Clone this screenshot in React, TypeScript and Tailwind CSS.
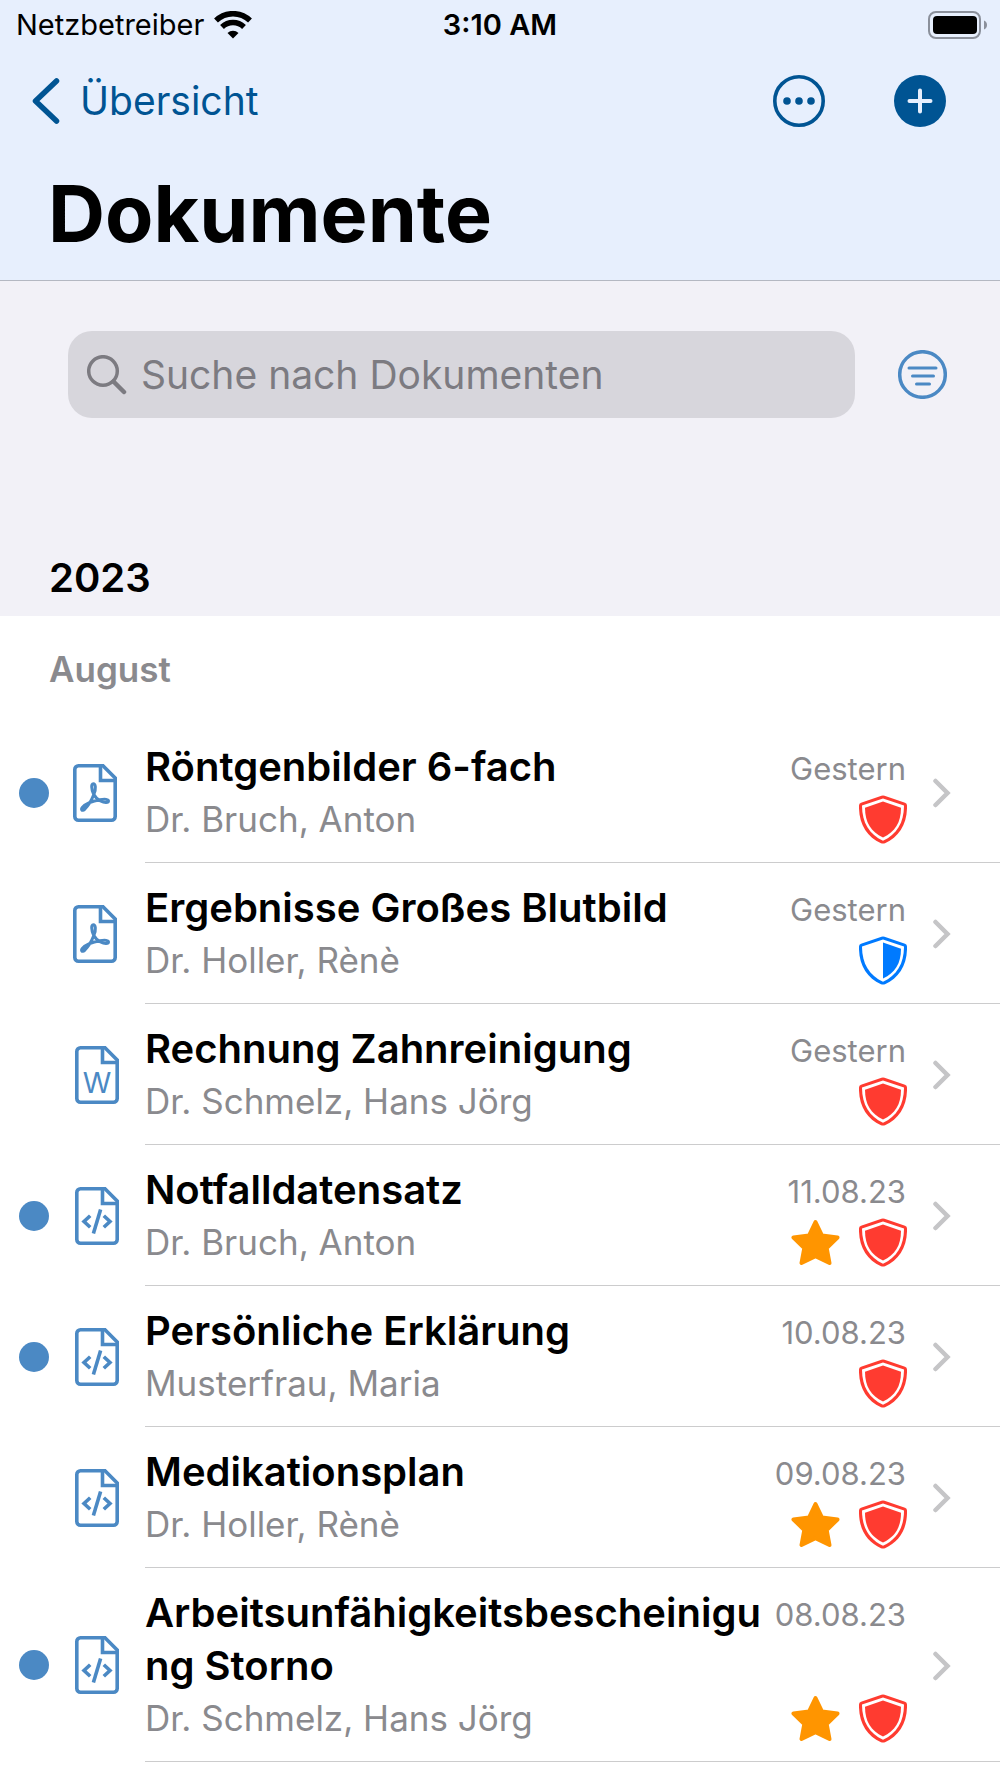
import type { ReactNode } from "react";

type FileType = "pdf" | "word" | "code";
type Shield = "full" | "half";

type DocumentItem = {
  title: string;
  author: string;
  date: string;
  type: FileType;
  unread?: boolean;
  favorite?: boolean;
  shield: Shield;
};

const documents: DocumentItem[] = [
  { title: "Röntgenbilder 6-fach", author: "Dr. Bruch, Anton", date: "Gestern", type: "pdf", unread: true, shield: "full" },
  { title: "Ergebnisse Großes Blutbild", author: "Dr. Holler, Rènè", date: "Gestern", type: "pdf", shield: "half" },
  { title: "Rechnung Zahnreinigung", author: "Dr. Schmelz, Hans Jörg", date: "Gestern", type: "word", shield: "full" },
  { title: "Notfalldatensatz", author: "Dr. Bruch, Anton", date: "11.08.23", type: "code", unread: true, favorite: true, shield: "full" },
  { title: "Persönliche Erklärung", author: "Musterfrau, Maria", date: "10.08.23", type: "code", unread: true, shield: "full" },
  { title: "Medikationsplan", author: "Dr. Holler, Rènè", date: "09.08.23", type: "code", favorite: true, shield: "full" },
  { title: "Arbeitsunfähigkeitsbescheinigung Storno", author: "Dr. Schmelz, Hans Jörg", date: "08.08.23", type: "code", unread: true, favorite: true, shield: "full" },
];

function WifiIcon() {
  return (
    <svg width="38" height="28" viewBox="0 0 38 28" fill="none" stroke="black" aria-hidden="true">
      <path d="M2 9.500A24.500 24.500 0 0 1 36 9.500" strokeWidth="5.500" />
      <path d="M8 16A16 16 0 0 1 30 16" strokeWidth="5.500" />
      <path d="M19 27.500L13.500 22A8 8 0 0 1 24.500 22Z" fill="black" stroke="none" />
    </svg>
  );
}

function BatteryIcon() {
  return (
    <svg width="60" height="28" viewBox="0 0 60 28" aria-hidden="true">
      <rect x="1" y="1" width="51" height="26" rx="7" fill="none" stroke="#8b909b" strokeWidth="2" />
      <rect x="5" y="5" width="44" height="18" rx="4" />
      <path d="M56 9.500C60 11 60 17 56 18.500Z" fill="#8b909b" />
    </svg>
  );
}

function FileIcon({ type }: { type: FileType }) {
  return (
    <svg
      width="44"
      height="58"
      viewBox="0 0 44 58"
      fill="none"
      stroke="#4b89c4"
      strokeWidth="3.600"
      className={type === "pdf" ? "mr-[2px]" : "ml-[2px]"}
      aria-hidden="true"
    >
      <path d="M5.500 1.800H30L42.200 14V52.500A3.700 3.700 0 0 1 38.500 56.200H5.500A3.700 3.700 0 0 1 1.800 52.500V5.500A3.700 3.700 0 0 1 5.500 1.800Z" />
      <path d="M27.500 2V16.500H42" />
      {type === "pdf" && (
        <path
          d="M20.500 30C18.300 25 18 19.700 20.300 19.700S23.200 25 21 30C18.500 36.500 14.500 42.500 11.500 45.500C9 47.500 7.600 45.500 9.500 43.200C12.500 40 19 37 27 35.700C32 34.900 35.500 35.200 35.500 37S31.500 39 27.500 37C23.500 34.700 21.500 32 20.500 30Z"
          strokeWidth="3"
          strokeLinejoin="round"
        />
      )}
      {type === "word" && (
        <text
          x="22"
          y="47"
          textAnchor="middle"
          fill="#4b89c4"
          stroke="none"
          className="font-[Inter,sans-serif] text-[29px]"
        >
          W
        </text>
      )}
      {type === "code" && (
        <g strokeWidth="3.600">
          <path d="M15.200 28.700L9 34.500L15.200 40.300" />
          <path d="M28.800 28.700L35 34.500L28.800 40.300" />
          <path d="M25.600 22.500L18.400 46.500" />
        </g>
      )}
    </svg>
  );
}

const shieldOuter =
  "M22.500 .8Q24 .2 25.500 .8L46 7.700Q48 8.500 48 10.500C48.500 29 40 42 26 48.200Q24 49 22 48.200C8 42 -.5 29 0 10.500Q0 8.500 2 7.700Z";

function ShieldIcon({ kind }: { kind: Shield }) {
  const color = kind === "full" ? "#ff3b30" : "#007aff";
  return (
    <svg width="48" height="49" viewBox="0 0 48 49" role="img" aria-label={kind === "full" ? "Streng vertraulich" : "Vertraulich"}>
      <path d={shieldOuter} fill={color} />
      <path d="M24 3.500L45 10.500C45 28 37.500 39.500 24 45.800C10.500 39.500 3 28 3 10.500Z" fill="white" />
      {kind === "full" ? (
        <path d="M24 6.500L42 12.700C42 27.500 36 36.800 24 42.500C12 36.800 6 27.500 6 12.700Z" fill={color} />
      ) : (
        <path d="M24 6.500L42 12.700C42 27.500 36 36.800 24 42.500Z" fill={color} />
      )}
    </svg>
  );
}

function StarIcon() {
  return (
    <svg width="49" height="49" viewBox="0 0 49 49" role="img" aria-label="Favorit">
      <path
        d="M24.500 4L31 17.500L46.500 19.500L35.700 30L38.500 45L24.500 38.300L10.500 45L13.300 30L2.500 19.500L18 17.500Z"
        fill="#ff9500"
        stroke="#ff9500"
        strokeWidth="4"
        strokeLinejoin="round"
      />
    </svg>
  );
}

function RoundButton({ label, children }: { label: string; children: ReactNode }) {
  return (
    <button type="button" aria-label={label} className="shrink-0">
      {children}
    </button>
  );
}

function DocumentRow({ doc }: { doc: DocumentItem }) {
  return (
    <li>
      <a href="#" className="flex">
        <div className="flex w-[145px] shrink-0 items-center pl-[19px]">
          <div className="w-[54px]">
            {doc.unread && <div className="size-[30px] rounded-full bg-[#4b89c4]" />}
          </div>
          <FileIcon type={doc.type} />
        </div>
        <div className="flex min-w-0 flex-1 border-b border-[#cccccd] pt-[18px] pb-4">
          <div className="min-w-0 flex-1">
            <h4 className="text-[40px] leading-[53px] font-semibold break-all text-black">{doc.title}</h4>
            <p className="text-[35px] leading-[53px] text-[#8a8a8e]">{doc.author}</p>
          </div>
          <div className="flex shrink-0 flex-col items-end justify-between pt-[3px] pb-[2px] pl-3">
            <span className="pr-px text-[31px] leading-[52px] text-[#8a8a8e]">{doc.date}</span>
            <div className="flex gap-[19px]">
              {doc.favorite && <StarIcon />}
              <ShieldIcon kind={doc.shield} />
            </div>
          </div>
          <div className="flex w-[93px] shrink-0 items-center pl-[26px]">
            <svg width="18" height="30" viewBox="0 0 18 30" fill="none" aria-hidden="true">
              <path d="M2.500 3L14.500 15L2.500 27" stroke="#c5c5c7" strokeWidth="4.500" strokeLinecap="round" />
            </svg>
          </div>
        </div>
      </a>
    </li>
  );
}

export default function App() {
  return (
    <div className="min-h-screen bg-white font-[Inter,sans-serif] text-black">
      <header className="border-b border-[#b4b8c2] bg-[#e7effd]">
        {/* Status bar */}
        <div className="grid grid-cols-3 items-center px-3 pt-2 text-[29px] leading-[34px]">
          <div className="flex items-center gap-[10px] pl-1">
            <span>Netzbetreiber</span>
            <WifiIcon />
          </div>
          <span className="text-center font-semibold">3:10 AM</span>
          <div className="flex justify-end">
            <BatteryIcon />
          </div>
        </div>

        {/* Navigation */}
        <div className="flex items-center justify-between pt-8 pr-[54px] pl-8 text-[#005493]">
          <a href="#" className="flex items-center gap-[20px] text-[39px] leading-[54px]">
            <svg width="28" height="46" viewBox="0 0 28 46" fill="none" aria-hidden="true">
              <path d="M24.500 3L3.500 23L24.500 43" stroke="currentColor" strokeWidth="5.500" strokeLinecap="round" strokeLinejoin="round" />
            </svg>
            Übersicht
          </a>
          <div className="flex gap-[69px]">
            <RoundButton label="Mehr">
              <svg width="52" height="52" viewBox="0 0 52 52">
                <circle cx="26" cy="26" r="24.200" fill="none" stroke="currentColor" strokeWidth="3.600" />
                <circle cx="14" cy="26" r="3.800" fill="currentColor" />
                <circle cx="26" cy="26" r="3.800" fill="currentColor" />
                <circle cx="38" cy="26" r="3.800" fill="currentColor" />
              </svg>
            </RoundButton>
            <RoundButton label="Hinzufügen">
              <svg width="52" height="52" viewBox="0 0 52 52">
                <circle cx="26" cy="26" r="26" fill="currentColor" />
                <path d="M26 15.500V36.500M15.500 26H36.500" stroke="#e7effd" strokeWidth="4" strokeLinecap="round" />
              </svg>
            </RoundButton>
          </div>
        </div>

        <h1 className="pt-[37px] pb-[19px] pl-[48px] text-[79px] leading-[96px] font-bold">Dokumente</h1>
      </header>

      <main>
        <section className="bg-[#f2f1f7] pt-[50px] pb-3">
          <div className="flex items-center gap-[43px] pr-[53px] pl-[68px]">
            <label className="flex h-[87px] min-w-0 flex-1 items-center gap-[14px] rounded-[24px] bg-[#d7d6dc] pl-[19px]">
              <svg width="40" height="40" viewBox="0 0 40 40" fill="none" stroke="#7c7b81" className="shrink-0" aria-hidden="true">
                <circle cx="16" cy="16" r="14.300" strokeWidth="3.500" />
                <path d="M26.500 26.500L37 37" strokeWidth="4.500" strokeLinecap="round" />
              </svg>
              <input
                type="search"
                aria-label="Suche nach Dokumenten"
                placeholder="Suche nach Dokumenten"
                className="min-w-0 flex-1 text-[39px] leading-[53px] outline-none placeholder:text-[#7c7b81]"
              />
            </label>
            <RoundButton label="Filter">
              <svg width="49" height="49" viewBox="0 0 49 49" fill="none" stroke="#4b89c4">
                <circle cx="24.500" cy="24.500" r="22.800" strokeWidth="3.500" />
                <path d="M11 18H38M14.500 26H35.500M18.500 34H31.500" strokeWidth="3" strokeLinecap="round" />
              </svg>
            </RoundButton>
          </div>
          <h2 className="pt-[133px] pl-[49px] text-[40px] leading-[53px] font-semibold">2023</h2>
        </section>

        <h3 className="pt-[27px] pb-[26px] pl-[49px] text-[35px] leading-[53px] font-semibold text-[#8a8a8e]">August</h3>
        <ul>
          {documents.map((doc) => (
            <DocumentRow key={doc.title} doc={doc} />
          ))}
        </ul>
      </main>
    </div>
  );
}
